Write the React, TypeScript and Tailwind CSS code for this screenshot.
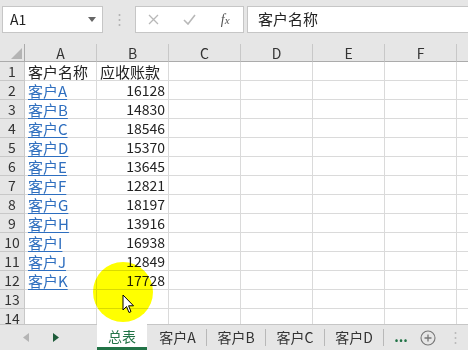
import React from "react";

const cols = ["A", "B", "C", "D", "E", "F", "G"];
const data: [string, string][] = [
  ["客户A", "16128"],
  ["客户B", "14830"],
  ["客户C", "18546"],
  ["客户D", "15370"],
  ["客户E", "13645"],
  ["客户F", "12821"],
  ["客户G", "18197"],
  ["客户H", "13916"],
  ["客户I", "16938"],
  ["客户J", "12849"],
  ["客户K", "17728"],
];

const font = { fontFamily: '"Noto Sans CJK SC", "Noto Sans", sans-serif' };

function Row({ n }: { n: number }) {
  let a: React.ReactNode = null;
  let b: React.ReactNode = null;
  if (n === 1) {
    a = <span className="text-[#222] text-[15px] leading-[15px]">客户名称</span>;
    b = <span className="text-[#222] text-[15px] leading-[15px]">应收账款</span>;
  } else if (n >= 2 && n <= 12) {
    const d = data[n - 2];
    a = <span className="text-[#2f6fbf] text-[15px] leading-[15px] underline underline-offset-2">{d[0]}</span>;
    b = <span className="text-[#222] leading-[14px]">{d[1]}</span>;
  }
  return (
    <div className="flex h-[19px] shrink-0">
      <div className="w-[25px] shrink-0 bg-[#e6e6e6] border-r border-b border-[#c8c8c8] flex items-center justify-center text-[14px] text-[#333] leading-none">
        {n}
      </div>
      {cols.map((c, i) => (
        <div
          key={c}
          className={`w-[72px] shrink-0 border-r border-b border-[#dadada] flex items-center text-[14px] leading-none px-[3px] ${
            i === 1 && n > 1 ? "justify-end" : "justify-start"
          }`}
        >
          {i === 0 ? a : i === 1 ? b : null}
        </div>
      ))}
    </div>
  );
}

export default function App() {
  const rows = Array.from({ length: 14 }, (_, i) => i + 1);
  return (
    <div className="w-[468px] h-[350px] relative overflow-hidden bg-white flex flex-col" style={font}>
      {/* toolbar */}
      <div className="h-[44px] shrink-0 bg-[#e6e6e6] flex items-start pt-[6px] pl-[2px]">
        <div className="w-[101px] h-[27px] bg-white border border-[#c6c6c6] flex items-center pl-[7px] pr-[6px]">
          <span className="text-[14px] text-[#222] flex-1">A1</span>
          <svg width="8" height="5" viewBox="0 0 8 5">
            <path d="M0 0 L8 0 L4 5 Z" fill="#666" />
          </svg>
        </div>
        <div className="w-[32px] h-[27px] flex items-center justify-center">
          <svg width="3" height="14" viewBox="0 0 3 14">
            <circle cx="1.5" cy="2" r="1" fill="#b0b0b0" />
            <circle cx="1.5" cy="7" r="1" fill="#b0b0b0" />
            <circle cx="1.5" cy="12" r="1" fill="#b0b0b0" />
          </svg>
        </div>
        <div className="w-[109px] h-[27px] bg-white border border-[#c6c6c6] flex items-center">
          <div className="w-[36px] flex justify-center">
            <svg width="11" height="11" viewBox="0 0 11 11">
              <path d="M1 1 L10 10 M10 1 L1 10" stroke="#b8b8b8" strokeWidth="1.3" />
            </svg>
          </div>
          <div className="w-[36px] flex justify-center">
            <svg width="13" height="11" viewBox="0 0 13 11">
              <path d="M1 6 L5 10 L12 1" stroke="#b8b8b8" strokeWidth="1.6" fill="none" />
            </svg>
          </div>
          <div className="w-[36px] flex justify-center">
            <span className="text-[14px] italic text-[#555]" style={{ fontFamily: '"Liberation Serif", serif' }}>
              f<span className="text-[11px]">x</span>
            </span>
          </div>
        </div>
        <div className="ml-[3px] flex-1 h-[27px] bg-white border border-[#c6c6c6] border-r-0 flex items-center pl-[10px] text-[15px] text-[#222]">
          客户名称
        </div>
      </div>
      {/* grid */}
      <div className="h-[280px] shrink-0 overflow-hidden flex flex-col">
        <div className="flex h-[18px] shrink-0">
          <div className="w-[25px] shrink-0 bg-[#e6e6e6] border-r border-b border-[#ababab] relative">
            <svg className="absolute right-[2px] bottom-[2px]" width="11" height="11" viewBox="0 0 11 11">
              <path d="M11 0 L11 11 L0 11 Z" fill="#b4b4b4" />
            </svg>
          </div>
          {cols.map((c) => (
            <div
              key={c}
              className="w-[72px] shrink-0 bg-[#e6e6e6] border-r border-[#c8c8c8] border-b border-b-[#ababab] flex items-center justify-center text-[14px] text-[#333] leading-none"
            >
              {c === "G" ? "" : c}
            </div>
          ))}
        </div>
        {rows.map((n) => (
          <Row key={n} n={n} />
        ))}
      </div>
      {/* tab bar */}
      <div className="h-[26px] shrink-0 bg-[#e6e6e6] border-t border-[#c6c6c6] flex items-stretch relative z-10 text-[14px]">
        <div className="w-[97px] shrink-0 flex items-center">
          <svg className="ml-[23px]" width="6" height="9" viewBox="0 0 6 9">
            <path d="M6 0 L6 9 L0 4.5 Z" fill="#b4b4b4" />
          </svg>
          <svg className="ml-[24px]" width="6" height="9" viewBox="0 0 6 9">
            <path d="M0 0 L0 9 L6 4.5 Z" fill="#1e5c3a" />
          </svg>
        </div>
        <div className="w-[50px] shrink-0 bg-white -mt-px flex items-center justify-center text-[#217346] border-b-[3px] border-[#217346] pt-[2px]">
          总表
        </div>
        {["客户A", "客户B", "客户C", "客户D"].map((t, i) => (
          <div key={t} className={`flex items-center ${i === 0 ? "w-[60px] pl-[2px]" : "w-[59px]"} shrink-0`}>
            <span className="flex-1 text-center text-[#333]">{t}</span>
            <span className="w-px h-[17px] bg-[#b8b8b8]" />
          </div>
        ))}
        <div className="w-[30px] shrink-0 flex items-center justify-center text-[#217346] font-bold leading-none pb-[4px] pl-[4px]">
          ...
        </div>
        <div className="w-[28px] shrink-0 flex items-center justify-center">
          <svg width="16" height="16" viewBox="0 0 16 16">
            <circle cx="8" cy="8" r="7" stroke="#777" strokeWidth="1.1" fill="none" />
            <path d="M8 4.5 V11.5 M4.5 8 H11.5" stroke="#777" strokeWidth="1.3" />
          </svg>
        </div>
        <div className="flex-1 flex items-center justify-center">
          <svg width="3" height="14" viewBox="0 0 3 14">
            <circle cx="1.5" cy="2" r="1" fill="#b8b8b8" />
            <circle cx="1.5" cy="7" r="1" fill="#b8b8b8" />
            <circle cx="1.5" cy="12" r="1" fill="#b8b8b8" />
          </svg>
        </div>
      </div>
      {/* highlight + cursor */}
      <div className="absolute left-[93px] top-[262px] w-[60px] h-[60px] rounded-full bg-[#ffff00] mix-blend-multiply" />
      <svg className="absolute left-[122px] top-[294px]" width="13" height="21" viewBox="0 0 13 21">
        <path d="M1 1 L1 16 L4.5 12.5 L7 18.5 L9 17.6 L6.6 11.8 L11.5 11.8 Z" fill="#fff" stroke="#000" strokeWidth="1" strokeLinejoin="round" />
      </svg>
    </div>
  );
}
